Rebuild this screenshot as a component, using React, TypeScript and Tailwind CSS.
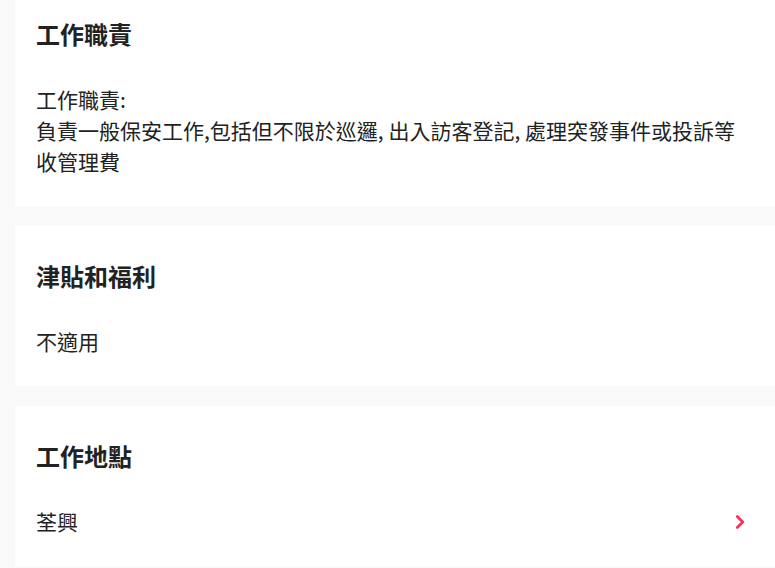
import { ChevronRight } from 'lucide-react'

const font = { fontFamily: '"Noto Sans CJK TC", "Noto Sans", sans-serif' }

type Section = { title: string; body: string; link?: boolean }

const sections: Section[] = [
  {
    title: '工作職責',
    body: '工作職責:\n負責一般保安工作,包括但不限於巡邏, 出入訪客登記, 處理突發事件或投訴等\n收管理費',
  },
  { title: '津貼和福利', body: '不適用' },
  { title: '工作地點', body: '荃興', link: true },
]

function Card({ s }: { s: Section }) {
  return (
    <div className="bg-white pl-[21px] pr-[24px] pt-[34px] pb-[29px]">
      <h2 className="text-[24px] leading-[32px] font-bold text-[#222]">{s.title}</h2>
      <div className="mt-[34px] flex items-center justify-between">
        <p className="text-[21px] leading-[31px] text-[#222] whitespace-pre-line">{s.body}</p>
        {s.link && <ChevronRight className="w-[22px] h-[22px] text-[#ff2d5a]" strokeWidth={3} />}
      </div>
    </div>
  )
}

export default function App() {
  return (
    <div className="min-h-screen bg-[#f9f9f9] pl-[15px] overflow-hidden" style={font}>
      <div className="-mt-[16px] flex flex-col gap-[20px]">
        {sections.map((s) => (
          <Card key={s.title} s={s} />
        ))}
      </div>
    </div>
  )
}
